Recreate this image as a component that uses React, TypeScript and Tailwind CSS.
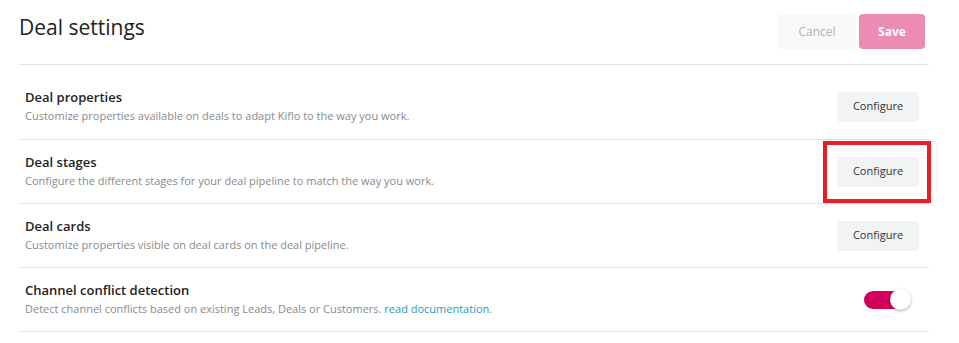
import { useState } from "react";

interface SettingRowProps {
  title: string;
  description: React.ReactNode;
  action: React.ReactNode;
  first?: boolean;
}

function SettingRow({ title, description, action, first }: SettingRowProps) {
  return (
    <div
      className={`flex items-center justify-between border-b border-[#e3e3e3] pl-[6px] pr-[10px] ${
        first ? "h-[75px] pt-[9px]" : "h-[64px]"
      }`}
    >
      <div className="flex flex-col gap-[2px]">
        <span className="text-[13px] leading-[17px] font-semibold text-[#222]">{title}</span>
        <span className="text-[11px] leading-[16px] text-[#8a8a8a]">{description}</span>
      </div>
      {action}
    </div>
  );
}

function ConfigureButton() {
  return (
    <button className="h-[30px] w-[82px] rounded-[4px] bg-[#f2f3f3] text-[11px] text-[#333]">
      Configure
    </button>
  );
}

function Toggle() {
  const [on, setOn] = useState(true);
  return (
    <button
      onClick={() => setOn(!on)}
      className="relative mr-[8px] h-[22px] w-[47px]"
      aria-pressed={on}
    >
      <span
        className={`absolute left-0 top-[2px] h-[18px] w-[40px] rounded-full ${
          on ? "bg-[#d1005c]" : "bg-[#ccc]"
        }`}
      />
      <span
        className={`absolute top-0 h-[21px] w-[21px] rounded-full bg-white shadow-[0_1px_3px_rgba(0,0,0,0.35)] ${
          on ? "left-[26px]" : "left-0"
        }`}
      />
    </button>
  );
}

export default function App() {
  return (
    <div className="w-[959px] h-[343px] bg-white pl-[19px] pr-[30px] font-['Open_Sans',sans-serif]">
      <header className="flex h-[65px] items-start justify-between border-b border-[#e3e3e3] pt-[14px]">
        <h1 className="mt-[-1px] text-[21px] leading-[28px] text-[#222]">Deal settings</h1>
        <div className="flex gap-[3px] pr-[4px]">
          <button className="h-[35px] w-[78px] rounded-[4px] bg-[#f8f8f8] text-[12px] text-[#b3b3b3]">
            Cancel
          </button>
          <button className="h-[35px] w-[66px] rounded-[4px] bg-[#ec8cb5] text-[12px] font-bold text-white">
            Save
          </button>
        </div>
      </header>

      <SettingRow
        first
        title="Deal properties"
        description="Customize properties available on deals to adapt Kiflo to the way you work."
        action={<ConfigureButton />}
      />
      <SettingRow
        title="Deal stages"
        description="Configure the different stages for your deal pipeline to match the way you work."
        action={
          <div className="relative">
            <ConfigureButton />
            <div className="pointer-events-none absolute left-[-14px] right-[-12px] top-[-16px] bottom-[-16px] border-[4px] border-[#ea1d25]" />
          </div>
        }
      />
      <SettingRow
        title="Deal cards"
        description="Customize properties visible on deal cards on the deal pipeline."
        action={<ConfigureButton />}
      />
      <SettingRow
        title="Channel conflict detection"
        description={
          <>
            Detect channel conflicts based on existing Leads, Deals or Customers.{" "}
            <a className="text-[#1a9cc7]">read documentation</a>.
          </>
        }
        action={<Toggle />}
      />
    </div>
  );
}
